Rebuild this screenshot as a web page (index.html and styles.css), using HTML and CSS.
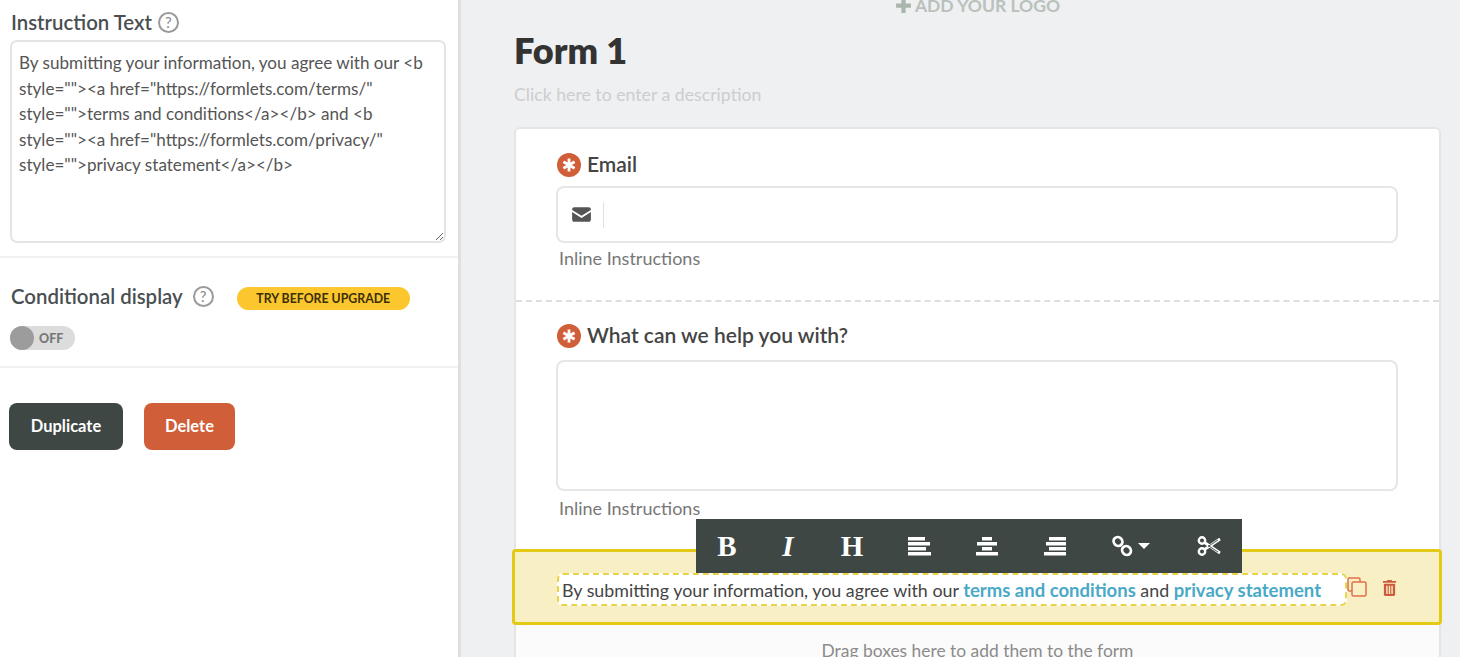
FILE: index.html
```html
<!DOCTYPE html>
<html lang="en">
<head>
<meta charset="utf-8">
<title>Form builder</title>
<link rel="stylesheet" href="styles.css">
</head>
<body>
<div class="app">
  <aside class="sidebar">
    <section class="sec sec-instr">
      <div class="label-row">
        <span class="side-label">Instruction Text</span>
        <span class="help">?</span>
      </div>
      <textarea class="instr" spellcheck="false">By submitting your information, you agree with our &lt;b
style=""&gt;&lt;a href="https://formlets.com/terms/"
style=""&gt;terms and conditions&lt;/a&gt;&lt;/b&gt; and &lt;b
style=""&gt;&lt;a href="https://formlets.com/privacy/"
style=""&gt;privacy statement&lt;/a&gt;&lt;/b&gt;</textarea>
    </section>
    <section class="sec sec-cond">
      <div class="label-row cond-row">
        <span class="side-label">Conditional display</span>
        <span class="help help-cond">?</span>
        <span class="try">TRY BEFORE UPGRADE</span>
      </div>
      <div class="toggle"><span class="knob"></span><span class="off">OFF</span></div>
    </section>
    <section class="actions">
      <button class="btn btn-dark">Duplicate</button>
      <button class="btn btn-red">Delete</button>
    </section>
  </aside>
  <main class="main">
    <div class="logo"><svg class="plus" viewBox="0 0 16 16"><path d="M6 1h4v5h5v4h-5v5H6v-5H1V6h5z"/></svg>ADD YOUR LOGO</div>
    <h1 class="title">Form 1</h1>
    <p class="desc">Click here to enter a description</p>
    <div class="card">
      <div class="field field-email">
        <div class="f-label"><span class="req"><svg viewBox="0 0 24 24"><path d="M12 5.500v13M6.400 8.750l11.200 6.500M17.600 8.750l-11.200 6.500"/></svg></span>Email</div>
        <div class="input">
          <svg class="mail" viewBox="0 0 20 16"><path d="M0 2.500C0 1.200 1 .2 2.300.2h15.400C19 .2 20 1.200 20 2.500v.6l-10 6.300L0 3.100z"/><path d="M0 5.200v8.300c0 1.300 1 2.300 2.300 2.300h15.400c1.300 0 2.300-1 2.300-2.300V5.200l-10 6.400z"/></svg>
          <span class="sep"></span>
        </div>
        <div class="inline">Inline Instructions</div>
      </div>
      <div class="field field-help">
        <div class="f-label"><span class="req"><svg viewBox="0 0 24 24"><path d="M12 5.500v13M6.400 8.750l11.200 6.500M17.600 8.750l-11.200 6.500"/></svg></span>What can we help you with?</div>
        <div class="area"></div>
        <div class="inline">Inline Instructions</div>
      </div>
      <div class="selected">
        <div class="toolbar">
          <span class="tool t-b">B</span>
          <span class="tool t-i">I</span>
          <span class="tool t-h">H</span>
          <svg class="tool-svg" viewBox="0 0 24 19"><path d="M1 0h17v3.600H1zM1 5h22v3.600H1zM1 10h18v3.600H1zM1 15h23v3.600H1z"/></svg>
          <svg class="tool-svg" viewBox="0 0 24 19"><path d="M7 0h10v3.600H7zM2 5h20v3.600H2zM7 10h10v3.600H7zM1 15h22v3.600H1z"/></svg>
          <svg class="tool-svg" viewBox="0 0 24 19"><path d="M6 0h17v3.600H6zM3 5h20v3.600H3zM6 10h17v3.600H6zM1 15h22v3.600H1z"/></svg>
          <span class="link-tool">
            <svg class="link" viewBox="0 0 22 24"><g fill="none" stroke="#fff" stroke-width="2.800"><ellipse cx="7" cy="7.500" rx="4.600" ry="4.200" transform="rotate(45 7 7.500)"/><ellipse cx="15.500" cy="16.500" rx="4.600" ry="4.200" transform="rotate(45 15.500 16.500)"/></g></svg>
            <span class="caret"></span>
          </span>
          <svg class="scissors" viewBox="0 0 24 20"><g fill="none" stroke="#fff"><circle cx="5" cy="4.500" r="3.200" stroke-width="2.400"/><circle cx="5" cy="15.500" r="3.200" stroke-width="2.400"/><path d="M7.500 6.500L23 17M7.500 13.500L23 3" stroke-width="2.800"/></g><path d="M11 9.500L21 16M11 10.500L21 4" fill="none" stroke="#3e4744" stroke-width=".9"/></svg>
        </div>
        <div class="editable">By submitting your information, you agree with our <a class="lnk">terms and conditions</a> and <a class="lnk">privacy statement</a></div>
        <svg class="copy" viewBox="0 0 20 20"><path d="M5 14H2.500A1.500 1.500 0 0 1 1 12.500v-10A1.500 1.500 0 0 1 2.500 1h9A1.500 1.500 0 0 1 13 2.500V5"/><rect x="5" y="5" width="14" height="14" rx="1.500"/></svg>
        <svg class="trash" viewBox="0 0 16 18"><path d="M5.500 2V1h5v1H15v2H1V2zM2 5h12v11.500a1.500 1.500 0 0 1-1.500 1.500h-9A1.500 1.500 0 0 1 2 16.500zM4.500 7v9h1.500V7zM7.250 7v9h1.500V7zM10 7v9h1.500V7z" fill-rule="evenodd"/></svg>
      </div>
      <div class="drag">Drag boxes here to add them to the form</div>
    </div>
  </main>
</div>
</body>
</html>
```
FILE: styles.css
```css
* { box-sizing: border-box; }
html, body { margin: 0; height: 100%; overflow: hidden; }
body { font-family: "Lato", "Noto Sans", sans-serif; color: #444; background: #eff0f2; }
.app { display: flex; height: 657px; overflow: hidden; }

.sidebar { width: 461px; flex: none; background: #fff; border-right: 3px solid #dfdfdf; }
.sec { border-bottom: 2px solid #f1f1f1; }
.sec-instr { height: 258px; padding: 11px 12px 0 10px; }
.sec-cond { height: 110px; padding: 27px 10px 0; }
.label-row { display: flex; align-items: center; height: 22px; }
.side-label { font-size: 20.400px; font-weight: 600; color: #4a4f52; padding-left: 1px; }
.help { width: 21px; height: 21px; margin-left: 6px; border: 2px solid #9a9a9a; border-radius: 50%; font-size: 15px; line-height: 17px; text-align: center; color: #8a8a8a; }
.instr { display: block; width: 436px; height: 203px; margin-top: 7px; padding: 8px 7px; border: 2px solid #e4e4e4; border-radius: 7px; font: 17.100px/25.500px "Lato", sans-serif; color: #555; resize: both; outline: none; overflow: hidden; }
.help-cond { margin-left: 10px; }
.try { margin: 4px 0 0 23px; width: 173px; height: 23px; border-radius: 12px; background: #fcc72e; color: #3a2f05; font-size: 12.300px; font-weight: 700; line-height: 23px; text-align: center; }
.toggle { display: flex; align-items: center; width: 65px; height: 24px; margin-top: 19px; border-radius: 12px; background: #dcdcdc; }
.knob { width: 24px; height: 24px; border-radius: 50%; background: #9c9c9c; }
.off { margin-left: 5px; font-size: 12.500px; font-weight: 900; color: #777; }
.actions { display: flex; gap: 21px; padding: 35px 9px 0; }
.btn { height: 47px; padding-bottom: 3px; border: 0; border-radius: 8px; color: #fff; font: 700 16.500px "Lato", sans-serif; }
.btn-dark { width: 114px; background: #3e4744; }
.btn-red { width: 91px; background: #d05e38; }

.main { flex: 1; min-width: 0; padding-left: 53px; padding-right: 19px; }
.logo { display: flex; align-items: center; justify-content: center; height: 18px; margin-top: -4px; font-size: 17.500px; font-weight: 700; color: #b9c1bc; }
.plus { width: 17px; height: 17px; margin-right: 3px; fill: #a9b5ad; }
.title { margin: 16px 0 0; font-size: 36px; line-height: 40px; font-weight: 800; color: #333; }
.desc { margin: 13px 0 0; font-size: 17.700px; line-height: 24px; color: #cdcdcd; }
.card { position: relative; margin-top: 20px; height: 540px; background: #fff; border: 2px solid #e5e5e5; border-bottom: 0; border-radius: 6px 6px 0 0; }
.field { padding: 0 41px 0 40px; }
.field-email { height: 173px; padding-top: 21px; border-bottom: 2px dashed #dedede; }
.field-help { height: 247px; padding-top: 19px; }
.f-label { display: flex; align-items: center; height: 26px; font-size: 21px; font-weight: 600; color: #444; }
.req { flex: none; display: flex; width: 24px; height: 24px; margin: 3px 6px 0 1px; border-radius: 50%; background: #d05e38; }
.req svg { width: 24px; height: 24px; fill: none; stroke: #fff; stroke-width: 2.800; }
.input { display: flex; align-items: center; height: 57px; margin-top: 10px; border: 2px solid #e6e6e6; border-radius: 8px; }
.mail { width: 19px; height: 15px; margin-left: 14px; fill: #555; }
.sep { width: 1px; height: 26px; margin-left: 12px; background: #e2e2e2; }
.inline { margin: 3px 0 0 3px; font-size: 18px; line-height: 24px; color: #777; }
.field-help .inline { margin-top: 5px; }
.area { height: 131px; margin-top: 13px; border: 2px solid #e6e6e6; border-radius: 8px; }

.selected { position: relative; display: flex; align-items: center; height: 76px; margin: 0 -3px 0 -4px; padding-left: 42px; background: #f8f0c4; border: 3px solid #e4c915; border-radius: 4px; }
.toolbar { position: absolute; left: 181px; top: -33px; display: flex; align-items: center; width: 546px; height: 54px; background: #3e4744; color: #fff; }
.tool { width: 68px; text-align: center; font-family: "Liberation Serif", serif; font-size: 29px; line-height: 54px; font-weight: 700; }
.t-b { width: 62px; }
.t-i { width: 60px; font-style: italic; }
.t-h { width: 68px; }
.tool-svg { flex: none; width: 24px; height: 19px; margin-right: 44px; fill: #fff; }
.tool-svg:first-of-type { margin-left: 21px; }
.link-tool { display: flex; align-items: center; width: 76px; }
.link { width: 22px; height: 24px; }
.caret { margin-left: 5px; border-left: 6px solid transparent; border-right: 6px solid transparent; border-top: 6px solid #fff; }
.scissors { width: 24px; height: 20px; margin-left: 10px; }
.editable { flex: none; width: 790px; height: 33px; margin-top: 4px; padding-left: 3px; background: #fff; border: 2px dashed #e8d44a; border-radius: 6px; font-size: 17.850px; line-height: 30px; color: #444; white-space: nowrap; }
.lnk { color: #4aa9c6; font-weight: 700; font-size: 18.500px; }
.copy { flex: none; width: 20px; height: 20px; fill: none; stroke: #e0704d; stroke-width: 1.500; }
.trash { flex: none; width: 15px; height: 17px; margin-left: 15px; fill: #cd5a3c; }
.drag { height: 40px; padding-top: 14px; background: #fbfbfb; text-align: center; font-size: 17.400px; line-height: 24px; color: #8b8b8b; }
```
